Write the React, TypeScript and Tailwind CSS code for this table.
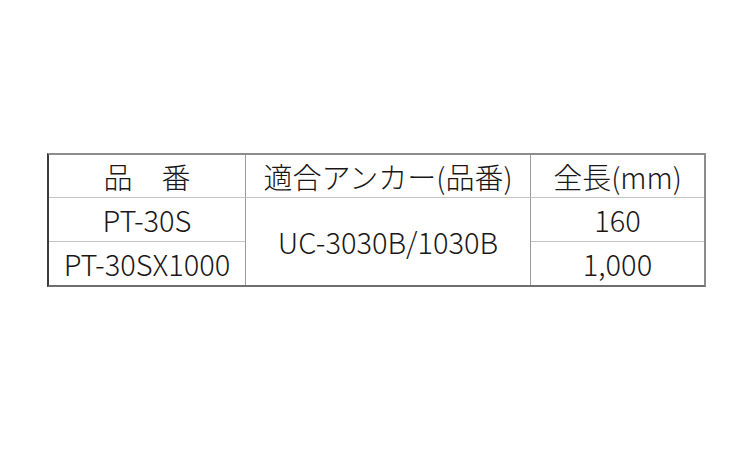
export default function App() {
  const font = { fontFamily: '"Noto Sans CJK JP", "Noto Sans", sans-serif' };
  return (
    <div className="w-[750px] h-[450px] bg-white overflow-hidden">
      <div
        className="ml-[47px] mt-[153px] w-[659px] grid grid-cols-[197px_285px_173px] grid-rows-[43px_44px_43px] border-l-2 border-t-2 border-r-2 border-b-2 border-l-[#3a3a3a] border-t-[#8c8c8c] border-r-[#8c8c8c] border-b-[#6e6e6e] text-[29px] font-light leading-none text-[#1a1718]"
        style={font}
      >
        <div className="flex items-center justify-center border-r border-b border-r-[#9a9a9a] border-b-[#c4c4c4]">
          品　番
        </div>
        <div className="flex items-center justify-center border-r border-b border-r-[#9a9a9a] border-b-[#c4c4c4]">
          適合アンカー(品番)
        </div>
        <div className="flex items-center justify-center border-b border-b-[#c4c4c4]">
          全長(mm)
        </div>
        <div className="flex items-center justify-center border-r border-b border-r-[#9a9a9a] border-b-[#c4c4c4]">
          PT-30S
        </div>
        <div className="row-span-2 flex items-center justify-center border-r border-r-[#9a9a9a]">
          UC-3030B/1030B
        </div>
        <div className="flex items-center justify-center border-b border-b-[#c4c4c4]">
          160
        </div>
        <div className="flex items-center justify-center border-r border-r-[#9a9a9a]">
          PT-30SX1000
        </div>
        <div className="flex items-center justify-center">1,000</div>
      </div>
    </div>
  );
}
